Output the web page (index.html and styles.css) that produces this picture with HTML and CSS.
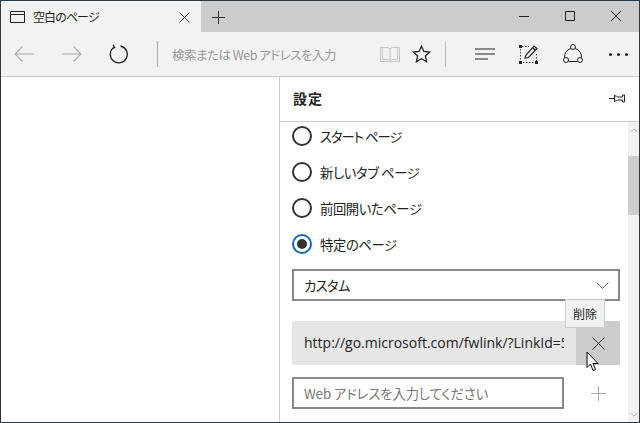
FILE: index.html
```html
<!DOCTYPE html>
<html lang="ja">
<head>
<meta charset="utf-8">
<title>空白のページ</title>
<link rel="stylesheet" href="styles.css">
</head>
<body>
<div class="window">
  <div class="tabbar">
    <div class="tab">
      <svg class="tab-icon" width="15" height="12" viewBox="0 0 15 12"><path d="M.5.5h14v11H.5zM.5 3.5h14" fill="none" stroke="#222"/></svg>
      <span class="tab-title">空白のページ</span>
      <svg class="tab-close" width="11" height="11" viewBox="0 0 11 11"><path d="M.5.5l10 10M10.500.5l-10 10" fill="none" stroke="#333"/></svg>
    </div>
    <svg class="new-tab" width="13" height="13" viewBox="0 0 13 13"><path d="M6.500 0v13M0 6.500h13" fill="none" stroke="#333"/></svg>
    <div class="caption">
      <svg width="10" height="10" viewBox="0 0 10 10"><path d="M0 5.500h10" stroke="#222" fill="none"/></svg>
      <svg width="10" height="10" viewBox="0 0 10 10"><path d="M.5.500h9v9h-9z" stroke="#222" fill="none"/></svg>
      <svg width="10" height="10" viewBox="0 0 10 10"><path d="M0 0l10 10M10 0L0 10" stroke="#222" fill="none"/></svg>
    </div>
  </div>
  <div class="toolbar">
    <svg class="nav-back" width="20" height="16" viewBox="0 0 20 16"><path d="M20 8H1M8.500.500L1 8l7.500 7.500" fill="none" stroke="#aaa" stroke-width="1.100"/></svg>
    <svg class="nav-fwd" width="20" height="16" viewBox="0 0 20 16"><path d="M0 8h19M11.500.500L19 8l-7.500 7.500" fill="none" stroke="#aaa" stroke-width="1.100"/></svg>
    <svg class="nav-reload" width="20" height="20" viewBox="0 0 20 20"><path d="M6 3.300A8.500 8.500 0 1 0 12.500 2M5 .8L6.600 3.600 3.800 5.200" fill="none" stroke="#222" stroke-width="1.300"/></svg>
    <span class="sep sep-a"></span>
    <span class="address">検索または Web アドレスを入力</span>
    <svg class="reading" width="20" height="17" viewBox="0 0 20 17"><path d="M.5 1.500h7q2 0 2.500 1.500.5-1.500 2.500-1.500h7v14h-7q-2 0-2.500 1-.5-1-2.500-1h-7zM10 3v13M2.500 1.500v12h5q2 0 2.500 1 .5-1 2.500-1h5v-12" fill="none" stroke="#c4c4c4"/></svg>
    <svg class="star" width="19" height="18" viewBox="0 0 19 18"><path d="M9.500 1.200l2.400 5.300 5.800.6-4.300 3.900 1.200 5.700-5.100-2.900-5.100 2.900 1.200-5.700L1.300 7.100l5.800-.6z" fill="none" stroke="#222" stroke-width="1.300"/></svg>
    <span class="sep sep-b"></span>
    <svg class="hub" width="20" height="12" viewBox="0 0 20 12"><path d="M0 1h20M0 6h20M0 11h13" fill="none" stroke="#222" stroke-width="1.200"/></svg>
    <svg class="note" width="19" height="19" viewBox="0 0 19 19"><path d="M3 1.500h7M1.500 4v12M17.500 9v7M4 17.500h11" fill="none" stroke="#444" stroke-dasharray="1.500 1.500"/><path d="M0 0h3v3H0zM16 16h3v3h-3zM0 16h3v3H0z" fill="#222"/><path d="M6 13l1-3 8-9 3 2.500-8.500 9zM13.500 2.700l3 2.500" fill="none" stroke="#222" stroke-width="1.200"/></svg>
    <svg class="share" width="20" height="20" viewBox="0 0 20 20"><circle cx="10" cy="3" r="2.500" fill="none" stroke="#222"/><circle cx="3" cy="16" r="2.500" fill="none" stroke="#222"/><circle cx="17" cy="16" r="2.500" fill="none" stroke="#222"/><path d="M7.800 4.500A8.500 8.500 0 0 0 1.600 13.800M12.200 4.500A8.500 8.500 0 0 1 18.400 13.800M5.500 17.500h9" fill="none" stroke="#222"/></svg>
    <span class="more"><i></i><i></i><i></i></span>
  </div>
  <div class="main">
    <div class="page"></div>
    <aside class="panel">
      <header class="panel-head">
        <h1>設定</h1>
        <svg width="16" height="9" viewBox="0 0 16 9"><path d="M0 4.500h5M5.500 1v7M5.500 2h2l1 1h5V1h2v7h-2V6h-5l-1 1h-2" fill="none" stroke="#222"/></svg>
      </header>
      <div class="panel-body">
        <div class="scroll-content">
          <label class="radio radio-kana"><span class="dot"></span>スタート ページ</label>
          <label class="radio"><span class="dot"></span>新しいタブ ページ</label>
          <label class="radio"><span class="dot"></span>前回開いたページ</label>
          <label class="radio"><span class="dot on"></span>特定のページ</label>
          <div class="select">カスタム
            <svg width="13" height="7" viewBox="0 0 13 7"><path d="M.5.500l6 6 6-6" fill="none" stroke="#777"/></svg>
          </div>
          <div class="url-row">
            <span class="url">http://go.microsoft.com/fwlink/?LinkId=517287</span>
            <span class="url-del"><svg width="13" height="13" viewBox="0 0 13 13"><path d="M.5.500l12 12M12.500.500l-12 12" fill="none" stroke="#333"/></svg></span>
            <span class="tooltip">削除</span>
            <svg class="cursor" width="13" height="21" viewBox="0 0 13 21"><path d="M1 1v15.500l3.500-3.500 2.500 6.500 2.500-1L7 12.500h5z" fill="#fff" stroke="#000"/></svg>
          </div>
          <div class="add-row">
            <span class="url-input">Web アドレスを入力してください</span>
            <svg class="add" width="15" height="15" viewBox="0 0 15 15"><path d="M7.500 0v15M0 7.500h15" fill="none" stroke="#aaa"/></svg>
          </div>
        </div>
        <div class="scrollbar">
          <svg class="arrow" width="8" height="5" viewBox="0 0 8 5"><path d="M.5 4L4 1l3.500 3" fill="none" stroke="#bbb"/></svg>
          <span class="thumb"></span>
          <svg class="arrow arrow-down" width="8" height="5" viewBox="0 0 8 5"><path d="M.5 1L4 4l3.500-3" fill="none" stroke="#bbb"/></svg>
        </div>
      </div>
    </aside>
  </div>
</div>
</body>
</html>
```
FILE: styles.css
```css
* { box-sizing: border-box; }
html, body { margin: 0; height: 100%; }
body { font-family: "Noto Sans CJK JP", "Liberation Sans", sans-serif; font-feature-settings: "palt"; color: #222; overflow: hidden; }
.window { width: 640px; height: 423px; border: 1px solid #2b3a42; display: flex; flex-direction: column; background: #fff; overflow: hidden; }
.tabbar { height: 31px; flex: none; background: #ccc; display: flex; align-items: center; }
.tab { width: 200px; height: 31px; background: #f2f2f2; display: flex; align-items: center; padding-left: 9px; }
.tab-title { font-size: 12px; letter-spacing: -0.9px; margin-left: 8px; width: 146px; }
.tab-close { flex: none; margin-top: 1px; }
.new-tab { margin-left: 11px; flex: none; margin-top: 1px; }
.caption { margin-left: auto; display: flex; gap: 36px; padding-right: 18px; margin-top: -1px; align-items: center; }
.caption svg { display: block; }
.toolbar { height: 45px; flex: none; background: #f2f2f2; border-bottom: 1px solid #ccc; display: flex; align-items: center; }
.nav-back { margin-left: 13px; }
.nav-fwd { margin-left: 28px; }
.nav-reload { margin-left: 26px; }
.sep { width: 1px; height: 26px; background: #aaa; flex: none; }
.sep-a { margin-left: 29px; }
.address { font-size: 12.5px; letter-spacing: -0.5px; color: #999; margin-left: 14px; width: 208px; white-space: nowrap; }
.reading { flex: none; }
.star { margin-left: 12px; flex: none; }
.sep-b { margin-left: 14px; background: #bbb; }
.hub { margin-left: 29px; flex: none; }
.note { margin-left: 24px; flex: none; }
.share { margin-left: 25px; flex: none; }
.more { margin-left: 26px; display: flex; gap: 5px; }
.more i { width: 3px; height: 3px; background: #222; border-radius: 50%; }
.main { flex: 1; display: flex; min-height: 0; }
.page { width: 278px; flex: none; background: #fff; }
.panel { flex: 1; border-left: 1px solid #ccc; display: flex; flex-direction: column; min-width: 0; }
.panel-head { height: 45px; flex: none; border-bottom: 1px solid #ccc; display: flex; align-items: center; justify-content: space-between; padding: 0 14px 2px 13px; }
.panel-head h1 { margin: 0; font-size: 14px; font-weight: 700; letter-spacing: 1px; }
.panel-body { flex: 1; display: flex; min-height: 0; overflow: hidden; }
.scroll-content { flex: 1; padding-left: 12px; padding-right: 8px; margin-top: -4px; }
.scrollbar { width: 11px; flex: none; background: #f2f2f2; display: flex; flex-direction: column; align-items: center; padding-top: 6px; }
.arrow { flex: none; }
.thumb { width: 11px; height: 59px; background: #cdcdcd; margin-top: 23px; flex: none; }
.arrow-down { margin-top: auto; margin-bottom: 5px; }
.radio { display: flex; align-items: center; height: 36px; font-size: 13.33px; letter-spacing: -0.4px; }
.radio-kana { letter-spacing: -1px; }
.dot { width: 20px; height: 20px; border: 2px solid #333; border-radius: 50%; margin-right: 8px; flex: none; display: block; }
.dot.on { border-color: #0f6cbd; position: relative; }
.dot.on::after { content: ""; position: absolute; left: 3px; top: 3px; width: 10px; height: 10px; border-radius: 50%; background: #333; }
.select { height: 32px; border: 2px solid #888; margin-top: 7px; padding: 0 9px 0 10px; display: flex; align-items: center; justify-content: space-between; font-size: 13.33px; letter-spacing: -0.7px; }
.url-row { display: flex; height: 44px; margin-top: 20px; background: #e6e6e6; position: relative; }
.url { font-family: "Open Sans", sans-serif; font-size: 14px; width: 272px; padding: 0 0 0 12px; line-height: 44px; overflow: hidden; white-space: nowrap; flex: none; margin-right: 12px; }
.url-del { flex: 1; background: #ccc; display: flex; align-items: center; justify-content: center; }
.tooltip { position: absolute; left: 273px; top: -22px; width: 40px; height: 29px; background: #f2f2f2; border: 1px solid #ccc; font-size: 12px; display: flex; align-items: center; justify-content: center; }
.cursor { position: absolute; left: 294px; top: 30px; }
.add-row { display: flex; align-items: center; margin-top: 12px; }
.url-input { width: 272px; height: 32px; border: 2px solid #888; font-size: 13.33px; letter-spacing: -0.1px; color: #777; padding-left: 10px; display: flex; align-items: center; flex: none; }
.add { margin-left: 27px; }
```
